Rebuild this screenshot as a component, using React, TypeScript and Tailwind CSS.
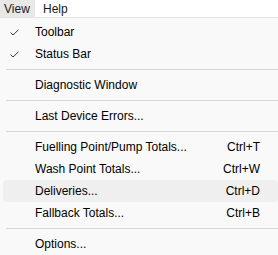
import React from 'react';

type Entry =
  | { kind: 'item'; label: string; shortcut?: string; checked?: boolean; hover?: boolean }
  | { kind: 'sep' };

const entries: Entry[] = [
  { kind: 'item', label: 'Toolbar', checked: true },
  { kind: 'item', label: 'Status Bar', checked: true },
  { kind: 'sep' },
  { kind: 'item', label: 'Diagnostic Window' },
  { kind: 'sep' },
  { kind: 'item', label: 'Last Device Errors...' },
  { kind: 'sep' },
  { kind: 'item', label: 'Fuelling Point/Pump Totals...', shortcut: 'Ctrl+T' },
  { kind: 'item', label: 'Wash Point Totals...', shortcut: 'Ctrl+W' },
  { kind: 'item', label: 'Deliveries...', shortcut: 'Ctrl+D', hover: true },
  { kind: 'item', label: 'Fallback Totals...', shortcut: 'Ctrl+B' },
  { kind: 'sep' },
  { kind: 'item', label: 'Options...' },
];

const CheckMark = () => (
  <svg width="9" height="7" viewBox="0 0 9 7" className="block">
    <path d="M0.5 3.5 L3 6 L8.5 0.8" fill="none" stroke="#3b3b3b" strokeWidth="1" />
  </svg>
);

const App: React.FC = () => {
  return (
    <div
      className="w-[278px] h-[255px] overflow-hidden bg-white text-[12px] text-[#1a1a1a]"
      style={{ fontFamily: '"Liberation Sans", Arial, sans-serif' }}
    >
      {/* Menu bar */}
      <div className="flex h-[17px] items-center bg-white">
        <div className="flex h-full w-[35px] items-center bg-[#e8e8e8] pl-[4px]">View</div>
        <div className="flex h-full items-center pl-[8px] pr-[8px]">Help</div>
      </div>

      {/* Dropdown */}
      <div className="h-[238px] border-t border-[#e3e3e3] bg-[#f9f9f9] pt-[3px] pl-[3px]">
        {entries.map((e, i) =>
          e.kind === 'sep' ? (
            <div key={i} className="flex h-[9px] items-center pl-[3px]">
              <div className="h-px w-full bg-[#d6d6d6]" />
            </div>
          ) : (
            <div
              key={i}
              className={`flex h-[22px] items-center rounded-[4px] pr-[18px] ${
                e.hover ? 'bg-[#efefef]' : ''
              }`}
            >
              <div className="flex w-[32px] items-center pl-[7px]">
                {e.checked && <CheckMark />}
              </div>
              <div className="flex-1 text-black">{e.label}</div>
              {e.shortcut && <div className="text-black">{e.shortcut}</div>}
            </div>
          )
        )}
      </div>
    </div>
  );
};

export default App;
